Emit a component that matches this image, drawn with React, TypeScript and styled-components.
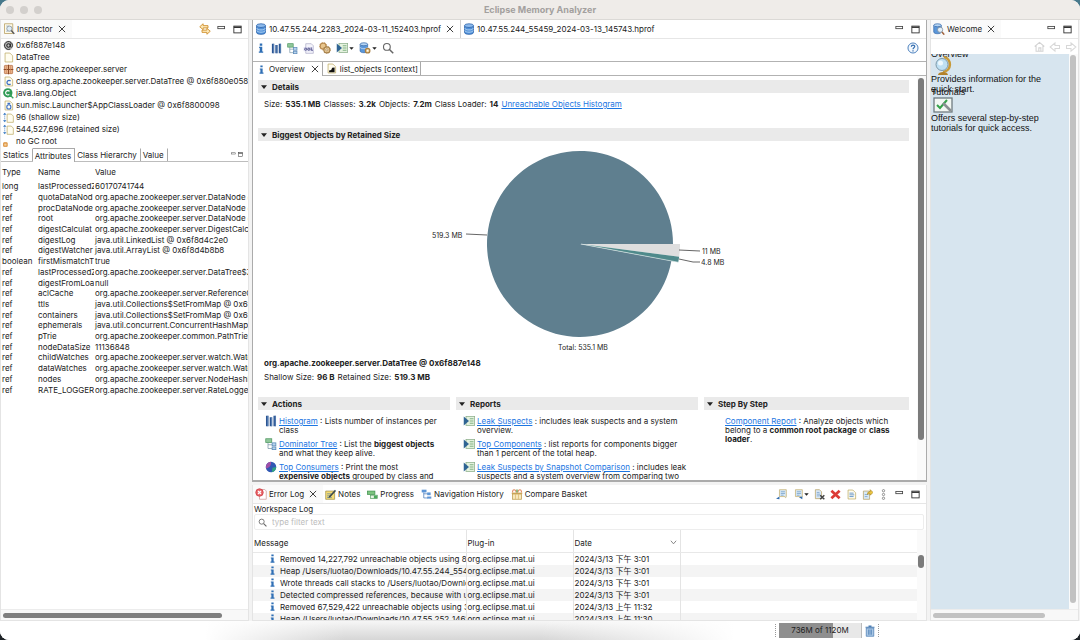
import React from "react";
import styled, { createGlobalStyle, css } from "styled-components";

const GlobalStyle = createGlobalStyle`
  *, *::before, *::after { box-sizing: border-box; }
  body {
    margin: 0;
    background: linear-gradient(#47798c, #1d2226);
    font-family: Inter, "Noto Sans CJK SC", sans-serif;
    font-size: 8px;
    line-height: 12px;
    color: #222;
  }
  button, input { font: inherit; color: inherit; background: none; border: 0; padding: 0; margin: 0; }
  svg { display: block; flex: none; }
  a { color: #1c76e2; text-decoration: underline; }
  b { font-weight: 700; }
`;

/* ---------- layout ---------- */

const Window = styled.div`
  height: 100vh;
  min-height: 480px;
  display: flex;
  flex-direction: column;
  background: #f3f3f3;
  border-radius: 9px;
  overflow: hidden;
`;

const TitleBar = styled.header`
  flex: none;
  height: 20px;
  display: grid;
  grid-template-columns: 1fr auto 1fr;
  align-items: center;
  padding: 0 6px;
  background: #efece9;
  border-bottom: 1px solid #dbd9d6;
`;

const Lights = styled.div`
  display: flex;
  gap: 6px;
`;

const Light = styled.button`
  width: 8px;
  height: 8px;
  border-radius: 50%;
  background: #d3d0cd;
`;

const Title = styled.h1`
  margin: 0;
  font-size: 9px;
  font-weight: 700;
  color: #a3a09e;
`;

const Workbench = styled.main`
  flex: 1;
  min-height: 0;
  display: grid;
  grid-template-columns: 249px minmax(0, 1fr) 149px;
  column-gap: 3px;
  padding-right: 1px;
`;

const Middle = styled.div`
  min-width: 0;
  min-height: 0;
  display: flex;
  flex-direction: column;
  gap: 3px;
`;

const Pane = styled.section<{ $strong?: boolean; $grow?: boolean; $height?: number }>`
  min-width: 0;
  min-height: 0;
  display: flex;
  flex-direction: column;
  overflow: hidden;
  background: #fff;
  border: solid ${(p) => (p.$strong ? "#ababab" : "#e4e4e4")};
  border-width: ${(p) => (p.$strong ? "0 1px 2px" : "0 1px 1px")};
  ${(p) => p.$grow && css`flex: 1;`}
  ${(p) => p.$height && css`flex: none; height: ${p.$height}px;`}
`;

const TabBar = styled.div`
  flex: none;
  height: 19px;
  display: flex;
  align-items: stretch;
  border-bottom: 1px solid #e6e6e6;
`;

const Tab = styled.button<{ $active?: boolean; $lined?: boolean }>`
  display: flex;
  align-items: center;
  gap: 2px;
  padding: 0 5px 0 2px;
  white-space: nowrap;
  background: ${(p) => (p.$active ? "#fafafa" : "transparent")};
  ${(p) => p.$lined && css`background: #fff; border-right: 1px solid #d0d0d0;`}
`;

const Tools = styled.div<{ $gap?: number }>`
  margin-left: auto;
  display: flex;
  align-items: center;
  gap: ${(p) => p.$gap ?? 5}px;
  padding-right: 5px;
`;

const ToolButton = styled.button`
  display: flex;
  align-items: center;
  justify-content: center;
  gap: 1px;
  min-width: 11px;
`;

const Row = styled.li`
  display: flex;
  align-items: center;
  gap: 2px;
  height: 12px;
  padding-left: 2px;
  white-space: nowrap;
  svg { width: 11px; height: 11px; }
`;

const InfoList = styled.ul`
  flex: none;
  margin: 0;
  padding: 0;
  height: 109px;
  list-style: none;
`;

const SubTabs = styled.div`
  flex: none;
  display: flex;
  height: 14px;
  border-bottom: 1px solid #bdbdbd;
`;

const SubTab = styled.button<{ $active?: boolean }>`
  padding: 0 3px 0 2px;
  border-right: 1px solid #a9a9a9;
  border-top: 1px solid ${(p) => (p.$active ? "#a9a9a9" : "transparent")};
  white-space: nowrap;
  ${(p) => p.$active && css`background: #fff; margin-bottom: -1px;`}
`;

const Scroll = styled.div`
  flex: 1;
  min-height: 0;
  overflow: hidden;
`;

const AttrTable = styled.table`
  width: 100%;
  height: 233px;
  table-layout: fixed;
  border-collapse: collapse;
  line-height: 10px;
  th { font-weight: 400; text-align: left; padding: 0 0 0 1px; height: 19px; }
  td { padding: 0 0 0 1px; overflow: hidden; white-space: nowrap; }
`;

const HTrack = styled.div<{ $soft?: boolean }>`
  flex: none;
  height: 11px;
  padding: 3px 2px;
  background: #f8f8f8;
  border-top: 1px solid #ececec;
  &::before {
    content: "";
    display: block;
    width: ${(p) => (p.$soft ? "78%" : "90%")};
    height: 5px;
    border-radius: 3px;
    background: ${(p) => (p.$soft ? "#c2c2c2" : "#7f7f7f")};
  }
`;

const VTrack = styled.div<{ $size: string; $soft?: boolean; $top?: number }>`
  flex: none;
  width: 9px;
  padding: ${(p) => p.$top ?? 1}px 2px 0 1px;
  background: #fafafa;
  &::before {
    content: "";
    display: block;
    height: ${(p) => p.$size};
    border-radius: 3px;
    background: ${(p) => (p.$soft ? "#c2c2c2" : "#7b7b7b")};
  }
`;

const Split = styled.div`
  flex: 1;
  min-height: 0;
  display: flex;
`;

/* ---------- editor ---------- */

const ToolBar = styled.div`
  flex: none;
  height: 22px;
  display: flex;
  align-items: center;
  gap: 5px;
  padding: 0 2px 4px 2px;
`;

const InnerTabs = styled.div`
  flex: none;
  display: flex;
  height: 15px;
  border-top: 1px solid #b2b2b2;
  border-bottom: 1px solid #b2b2b2;
`;

const InnerTab = styled.button<{ $active?: boolean }>`
  display: flex;
  align-items: center;
  gap: 3px;
  padding: 0 2px 0 3px;
  background: #fff;
  border-right: 1px solid #a9a9a9;
  white-space: nowrap;
  ${(p) => p.$active && css`margin-bottom: -1px; padding-left: 4px;`}
`;

const Page = styled.div`
  flex: 1;
  min-width: 0;
  overflow: hidden;
  padding: 4px 8px 0 5px;
`;

const SectionHead = styled.button`
  display: flex;
  align-items: center;
  gap: 5px;
  width: 100%;
  height: 13px;
  padding-left: 3px;
  background: #eaeaea;
  font-weight: 700;
  text-align: left;
`;

const Facts = styled.p<{ $tight?: boolean }>`
  display: flex;
  gap: 3px;
  margin: 0;
  padding: ${(p) => (p.$tight ? "2px 6px 14px" : "5px 6px 18px")};
  white-space: nowrap;
`;

const ObjectName = styled.h2`
  margin: 0;
  padding: 2px 6px 0;
  font-size: 8px;
  line-height: 12px;
`;

const Chart = styled.svg`
  display: block;
  margin: 0 auto;
  font-size: 7px;
  fill: #222;
`;

const Columns = styled.div`
  display: grid;
  grid-template-columns: 192fr 242fr 205fr;
  column-gap: 6px;
`;

const Entries = styled.ul<{ $indent: number }>`
  margin: 0;
  padding: 7px 0 0 ${(p) => p.$indent}px;
  list-style: none;
  line-height: 9px;
`;

const Entry = styled.li`
  display: flex;
  gap: 2px;
  margin-bottom: 5px;
  white-space: nowrap;
  svg { width: 12px; height: 12px; margin-top: -2px; }
`;

/* ---------- log ---------- */

const LogTitle = styled.div`
  flex: none;
  height: 10px;
  padding-left: 1px;
  line-height: 10px;
`;

const Filter = styled.label`
  flex: none;
  display: flex;
  align-items: center;
  gap: 5px;
  height: 16px;
  margin: 0 2px 0 1px;
  padding-left: 3px;
  border: 1px solid #ededed;
  border-radius: 2px;
`;

const FilterInput = styled.input`
  flex: 1;
  outline: none;
  &::placeholder { color: #bcbcbc; opacity: 1; }
`;

const LogTable = styled.table`
  width: 100%;
  table-layout: fixed;
  border-collapse: collapse;
  th { height: 22px; padding: 4px 0 0 1px; font-weight: 400; text-align: left; border-bottom: 1px solid #e8e8e8; }
  td { height: 12px; padding: 0 0 0 1px; overflow: hidden; white-space: nowrap; }
  th + th, td + td { border-left: 1px solid #e4e4e4; }
  tbody tr:nth-child(even) { background: #f4f4f4; }
`;

const Message = styled.span`
  display: flex;
  align-items: center;
  gap: 3px;
  padding-left: 14px;
`;

const DateHead = styled.span`
  display: flex;
  align-items: center;
  justify-content: space-between;
  padding-right: 3px;
`;

/* ---------- welcome ---------- */

const WelcomeTools = styled.div`
  flex: none;
  height: 15px;
  display: flex;
  justify-content: flex-end;
  align-items: center;
  gap: 4px;
  padding-right: 1px;
`;

const WelcomePage = styled.div`
  flex: 1;
  min-width: 0;
  overflow: hidden;
  background: #d7e5ef;
  font-family: "Liberation Sans", Arial, sans-serif;
  font-size: 9px;
  line-height: 10px;
  color: #111;
`;

const Topic = styled.h3<{ $pull: number }>`
  margin: -${(p) => p.$pull}px 0 0;
  font-size: 9px;
  font-weight: 400;
`;

const TopicText = styled.p`
  margin: 0;
  max-width: 116px;
`;

const GlobeStand = styled.svg`
  margin: -3px 0 -2px 3px;
`;

const TutorialPicture = styled.svg`
  margin-left: 2px;
`;

/* ---------- status ---------- */

const StatusBar = styled.footer`
  flex: none;
  height: 19px;
  display: flex;
  align-items: center;
  justify-content: flex-end;
  gap: 2px;
  padding-right: 200px;
  background:
    linear-gradient(90deg, #fff 19%, #fff0 32%, #fff0 50%, #fff 68%),
    linear-gradient(#f6f6f6, #d6d6d6);
`;

const Grip = styled.i`
  width: 2px;
  height: 13px;
  border-left: 1px dotted #999;
`;

const Heap = styled.div`
  width: 83px;
  height: 15px;
  line-height: 15px;
  text-align: center;
  border-right: 1px solid #bbb;
  background: linear-gradient(90deg, #8f8f8f 66%, #e8e8e8 66%);
`;

/* ---------- icons ---------- */

const Icon = ({ children, s = 11 }: { children: React.ReactNode; s?: number }) => (
  <svg width={s} height={s} viewBox="0 0 16 16" fill="none" aria-hidden="true">
    {children}
  </svg>
);

const sheet = <path d="M3 1.5h7l4 4v9H3z" fill="#fffdf0" stroke="#b9a45c" />;

const CloseBox = styled.span`
  margin-left: 2px;
`;
const CloseIcon = () => (
  <CloseBox><Icon s={10}><path d="M3 3l10 10M13 3L3 13" stroke="#333" strokeWidth="1.5" /></Icon></CloseBox>
);
const MinIcon = ({ s = 9 }) => (
  <Icon s={s}><rect x="1.5" y="2.5" width="12" height="4" stroke="#444" strokeWidth="1.5" /></Icon>
);
const MaxIcon = ({ s = 9 }) => (
  <Icon s={s}><rect x="1.5" y="2" width="13" height="12" stroke="#333" strokeWidth="1.6" /><path d="M1.5 4h13" stroke="#333" strokeWidth="2.5" /></Icon>
);
const InfoIcon = ({ s = 10 }) => (
  <Icon s={s}><path d="M6 .8h4v3.400H6zM5 6h5v7.500h1.500v2h-7v-2H6V8H5z" fill="#2f6fb5" /></Icon>
);
const InspectorIcon = () => (
  <Icon s={12}><path d="M2 1h11v13H2z" fill="#fffbe8" stroke="#b49b5c" /><path d="M4 4h4M4 11h3" stroke="#9bb6d6" /><circle cx="8.500" cy="7.500" r="3.500" fill="#dcebf7" stroke="#7c8792" /><path d="M11 10l4 4.500" stroke="#555" strokeWidth="2" /></Icon>
);
const LinkIcon = () => (
  <Icon s={12}><path d="M12 6.500H5.500V9L1 5l4.500-4v2.500H12zM4 9.500h6.500V7L15 11l-4.500 4v-2.500H4z" stroke="#d0902c" fill="#fdeabb" strokeWidth="1.200" /></Icon>
);
const PageIcon = () => <Icon>{sheet}</Icon>;
const AtIcon = () => (
  <Icon><circle cx="8" cy="8" r="7" fill="#c4c4c4" /><circle cx="8" cy="8" r="2.500" stroke="#222" strokeWidth="1.600" /><path d="M10.700 5v4.500c0 2 3 1.500 3-1.500a5.700 5.700 0 1 0-3 5" stroke="#222" strokeWidth="1.400" /></Icon>
);
const PackageIcon = () => (
  <Icon><rect x="2" y="2" width="12" height="12" rx="1" fill="#e8b48c" stroke="#b1643a" /><path d="M8 1v14M1 8h14" stroke="#8f4a27" strokeWidth="1.500" /><path d="M5 2v12M11 2v12" stroke="#d08a60" /></Icon>
);
const ClassFileIcon = () => (
  <Icon>{sheet}<path d="M11 7.500a3 3 0 1 0 0 4" stroke="#3d6fc4" strokeWidth="1.800" /></Icon>
);
const LoaderIcon = () => (
  <Icon>{sheet}<circle cx="8.500" cy="10" r="3" stroke="#3d6fc4" strokeWidth="1.600" /><path d="M6.500 5h4" stroke="#3d6fc4" strokeWidth="2" /></Icon>
);
const SuperClassIcon = () => (
  <Icon><circle cx="7" cy="7" r="6.800" fill="#2f9a55" /><path d="M9.500 5a3.200 3.200 0 1 0 0 4" stroke="#fff" strokeWidth="1.700" /><path d="M10 10l5 5M10 13v-3h3" stroke="#36a35c" strokeWidth="2" /></Icon>
);
const SizeIcon = () => (
  <Icon><path d="M6 3h6l3 3v9H6z" fill="#fffdf0" stroke="#b9a45c" /><path d="M2.500 2v12" stroke="#3d7cc4" strokeDasharray="2 1" /><path d="M0 4l2.500-3L5 4zM0 12l2.500 3L5 12z" fill="#3d7cc4" /></Icon>
);
const RootIcon = () => (
  <Icon><rect x="1" y="10" width="5" height="5" rx="1" fill="#f5cf9b" stroke="#d98b32" strokeWidth="1.500" /></Icon>
);
const DbIcon = () => (
  <Icon s={12}><path d="M2 3.500v9c0 3.500 12 3.500 12 0v-9" fill="#4f8fd8" stroke="#2b62a8" /><ellipse cx="8" cy="3.500" rx="6" ry="2.500" fill="#8dbaec" stroke="#2b62a8" /><path d="M2.500 7c0 3 11 3 11 0M2.500 10c0 3 11 3 11 0" stroke="#b9d8f5" strokeWidth="1.200" /></Icon>
);
const BarsIcon = () => (
  <Icon><path d="M3 1v14M8 3v12M13 1v14" stroke="#2b5593" strokeWidth="3.400" /><path d="M3.700 1v14M8.700 3v12M13.700 1v14" stroke="#7fa3cf" strokeWidth=".8" /></Icon>
);
const TreeIcon = () => (
  <Icon><path d="M4 6v8h6M4 9h6" stroke="#7a96a8" /><rect x="1" y="1" width="8" height="5" fill="#8fc79a" stroke="#4e9660" /><rect x="9.500" y="6.500" width="5" height="4" fill="#b9d4ee" stroke="#5585b5" /><rect x="9.500" y="12" width="5" height="3.500" fill="#b9d4ee" stroke="#5585b5" /></Icon>
);
const OqlIcon = () => (
  <Icon><path d="M4 1h8l3 3v11H4z" fill="#f4f4fb" stroke="#aaa9c4" /><rect x="1" y="6" width="14" height="6" fill="#dad9ee" /><circle cx="4" cy="9" r="1.600" stroke="#42437d" strokeWidth="1.200" /><circle cx="8.500" cy="9" r="1.600" stroke="#42437d" strokeWidth="1.200" /><path d="M12 6.500v4h2.500" stroke="#42437d" strokeWidth="1.200" /></Icon>
);
const GearsIcon = () => (
  <Icon s={12}><circle cx="5.500" cy="5.500" r="4" fill="#e8c68e" stroke="#b98a4d" strokeWidth="1.600" /><circle cx="5.500" cy="5.500" r="5" stroke="#b98a4d" strokeDasharray="1.500 2" /><circle cx="10.500" cy="10.500" r="4" fill="#edcf9c" stroke="#a8834d" strokeWidth="1.400" /><circle cx="10.500" cy="10.500" r="4.900" stroke="#a8834d" strokeDasharray="1.500 2" /><circle cx="10.500" cy="10.500" r="1.500" fill="#fff" stroke="#a8834d" /></Icon>
);
const ReportIcon = () => (
  <Icon s={12}><rect x="4" y="2" width="11.500" height="12" fill="#e5f2df" stroke="#8cae8a" /><path d="M9 5h5M9 8h5M9 11h5" stroke="#7fb184" strokeWidth="1.300" /><path d="M1 2l7 6-7 6z" fill="#2f6493" /></Icon>
);
const DbGearIcon = () => (
  <Icon s={12}><path d="M1.500 3v9c0 3 10 3 10 0V3" fill="#5b97da" stroke="#3a6cab" /><ellipse cx="6.500" cy="3" rx="5" ry="2" fill="#b5d4f3" stroke="#3a6cab" /><path d="M1.500 7c0 2.500 10 2.500 10 0" stroke="#cfe3f8" /><circle cx="11.500" cy="11.500" r="3" fill="#edcf98" stroke="#aa8043" strokeWidth="1.600" /><circle cx="11.500" cy="11.500" r="1" fill="#fff" /></Icon>
);
const CaretIcon = () => <Icon s={5}><path d="M1 4h14l-7 8z" fill="#222" /></Icon>;
const ChevronIcon = () => <Icon s={7}><path d="M2 4l6 7 6-7" stroke="#777" strokeWidth="2" /></Icon>;
const SearchIcon = ({ s = 12 }) => (
  <Icon s={s}><circle cx="6.500" cy="6.500" r="4.500" stroke="#666" strokeWidth="1.500" /><path d="M10 10l5 5" stroke="#666" strokeWidth="2" /></Icon>
);
const HelpIcon = () => (
  <Icon s={12}><circle cx="8" cy="8" r="6.700" fill="#f3f8fd" stroke="#4a80bd" strokeWidth="1.300" /><path d="M5.800 6.300c0-3 4.600-2.800 4.500-.2C10.200 7.800 8 7.600 8 9.700M8 11v1.600" stroke="#336cae" strokeWidth="1.600" /></Icon>
);
const ContextIcon = () => (
  <Icon>{sheet}<path d="M4.500 13.500V11l3-1 1.500-3 3.500-.5v7z" fill="#111" /></Icon>
);
const GlobeIcon = () => (
  <Icon s={12}><circle cx="8" cy="8" r="7" fill="#3158b4" /><path d="M8 1a7 7 0 0 0-6.500 9C5 9 9 6 8 1z" fill="#a04fa6" /><path d="M9 15c4-1 6-4 6-7l-5 1z" fill="#32a384" /></Icon>
);
const ErrorLogIcon = () => (
  <Icon s={12}><path d="M6 2h7l2 2v11H6z" fill="#fff" stroke="#c99" /><circle cx="6" cy="6" r="5" fill="#e8666a" stroke="#cc3a41" /><path d="M4 4l4 4M8 4L4 8" stroke="#fff" strokeWidth="1.600" /></Icon>
);
const NotesIcon = () => (
  <Icon><path d="M1 3h13v12H1z" fill="#f6dd74" stroke="#9b8b45" /><path d="M3 7h6M3 10h4M3 12.500h7" stroke="#4f79aa" /><path d="M14.500 1L6 10l-1 3 3-1.500L16 3z" fill="#3c4a4f" /></Icon>
);
const ProgressIcon = () => (
  <Icon><rect x=".5" y="3" width="11" height="5" fill="#7cc47f" stroke="#3d8f4d" /><rect x="5" y="9" width="10" height="5" fill="#e7f4e5" stroke="#559e62" /><path d="M10 9.500h4.500v4H10z" fill="#4ba75b" /></Icon>
);
const HistoryIcon = () => (
  <Icon><path d="M4 5v8h6M4 7h6" stroke="#3a70b3" /><rect x="1" y="1" width="7" height="4" fill="#5d95d6" /><rect x="9" y="5" width="5" height="4" fill="#5d95d6" /><rect x="9" y="11" width="6" height="3" fill="#5d95d6" /></Icon>
);
const BasketIcon = () => (
  <Icon s={12}><rect x="2" y="8" width="12" height="7" fill="#f8e8bd" stroke="#c09c4d" /><path d="M1 7h14" stroke="#c69a44" strokeWidth="1.600" /><path d="M6 8v7M10 8v7" stroke="#dcbb74" /><path d="M2 6c0-5 4-5 5 0M9 6c1-5 5-5 5 0" stroke="#e08a62" strokeWidth="1.400" /><path d="M8 2v4" stroke="#72a85c" strokeWidth="2" /></Icon>
);
const ExportIcon = ({ right = false }) => (
  <Icon><path d="M5 1h10v10c0 2-2 2-2 0H5z" fill="#d8e9f5" stroke="#c3ab64" /><path d="M7 4h6M7 6.500h6M7 9h4" stroke="#6b98c4" /><path d={right ? "M10 12l5-1v4z" : "M0 14l5-3v4z"} fill="#2f6bad" /></Icon>
);
const ClearIcon = () => (
  <Icon><path d="M2 1h6l3 3v10H2z" fill="#dae8f5" stroke="#b59e5b" /><path d="M4 5h4M4 7.500h5M4 10h4" stroke="#6b98c4" /><path d="M9 9l6 6M15 9l-6 6" stroke="#444" strokeWidth="2.200" /></Icon>
);
const DeleteIcon = () => <Icon><path d="M2 2.500l12 11M14 2.500l-12 11" stroke="#dc3b36" strokeWidth="4" /></Icon>;
const LogFileIcon = () => (
  <Icon>{sheet}<path d="M5 6h6M5 8.500h7M5 11h6" stroke="#5d8fc7" strokeWidth="1.300" /></Icon>
);
const RestoreIcon = () => (
  <Icon><path d="M2 3h9v12H2z" fill="#d8e9f5" stroke="#b59e5b" /><path d="M4 8h5M4 11h4" stroke="#6b98c4" /><path d="M8 8c0-4 2-4 4-4V1l4 4-4 4V7c-2 0-3 0-4 1z" fill="#efc840" stroke="#a98520" /></Icon>
);
const DotsIcon = () => (
  <Icon><circle cx="8" cy="2.500" r="1.700" stroke="#666" /><circle cx="8" cy="8" r="1.700" stroke="#666" /><circle cx="8" cy="13.500" r="1.700" stroke="#666" /></Icon>
);
const WelcomeIcon = () => (
  <Icon s={12}><path d="M1 3v9c0 3 10 3 10 0V3" fill="#5b97da" stroke="#3a6cab" /><ellipse cx="6" cy="3" rx="5" ry="2" fill="#b5d4f3" stroke="#3a6cab" /><circle cx="9.500" cy="9" r="3.500" fill="#e4f0fa" stroke="#7b8894" /><path d="M12 12l3 3.500" stroke="#a0623c" strokeWidth="2" /></Icon>
);
const HomeIcon = () => <Icon><path d="M1 8l7-6 7 6M3 7v8h10V7M7 15v-5h3v5" stroke="#d3d3d3" strokeWidth="1.500" /></Icon>;
const ArrowIcon = ({ right = false }) => (
  <Icon s={12}><path d={right ? "M2 6h6V2.500L14.500 8 8 13.500V10H2z" : "M14 6H8V2.500L1.500 8 8 13.500V10h6z"} stroke="#d8d8d8" strokeWidth="1.400" /></Icon>
);
const TrashIcon = () => (
  <Icon s={12}><path d="M3 4h10v11H3z" fill="#a9c6e4" stroke="#4b7db3" /><path d="M2 3h12M6 1.500h4M6.500 6v7M9.500 6v7" stroke="#4b7db3" strokeWidth="1.400" /></Icon>
);

/* ---------- data ---------- */

const info: [React.ReactNode, string][] = [
  [<AtIcon />, "0x6f887e148"],
  [<PageIcon />, "DataTree"],
  [<PackageIcon />, "org.apache.zookeeper.server"],
  [<ClassFileIcon />, "class org.apache.zookeeper.server.DataTree @ 0x6f880e058"],
  [<SuperClassIcon />, "java.lang.Object"],
  [<LoaderIcon />, "sun.misc.Launcher$AppClassLoader @ 0x6f8800098"],
  [<SizeIcon />, "96 (shallow size)"],
  [<SizeIcon />, "544,527,696 (retained size)"],
  [<RootIcon />, "no GC root"],
];

const attributes = [
  ["long", "lastProcessedZ", "60170741744"],
  ["ref", "quotaDataNod", "org.apache.zookeeper.server.DataNode @"],
  ["ref", "procDataNode", "org.apache.zookeeper.server.DataNode @"],
  ["ref", "root", "org.apache.zookeeper.server.DataNode @"],
  ["ref", "digestCalculat", "org.apache.zookeeper.server.DigestCalcu"],
  ["ref", "digestLog", "java.util.LinkedList @ 0x6f8d4c2e0"],
  ["ref", "digestWatcher", "java.util.ArrayList @ 0x6f8d4b8b8"],
  ["boolean", "firstMismatchT", "true"],
  ["ref", "lastProcessedZ", "org.apache.zookeeper.server.DataTree$Z"],
  ["ref", "digestFromLoa", "null"],
  ["ref", "aclCache", "org.apache.zookeeper.server.ReferenceC"],
  ["ref", "ttls", "java.util.Collections$SetFromMap @ 0x6f"],
  ["ref", "containers", "java.util.Collections$SetFromMap @ 0x6f"],
  ["ref", "ephemerals", "java.util.concurrent.ConcurrentHashMap"],
  ["ref", "pTrie", "org.apache.zookeeper.common.PathTrie"],
  ["ref", "nodeDataSize", "11136848"],
  ["ref", "childWatches", "org.apache.zookeeper.server.watch.Watc"],
  ["ref", "dataWatches", "org.apache.zookeeper.server.watch.Watc"],
  ["ref", "nodes", "org.apache.zookeeper.server.NodeHashM"],
  ["ref", "RATE_LOGGER", "org.apache.zookeeper.server.RateLogger"],
];

const logRows = [
  ["Removed 14,227,792 unreachable objects using 8", "2024/3/13 下午 3:01"],
  ["Heap /Users/luotao/Downloads/10.47.55.244_554", "2024/3/13 下午 3:01"],
  ["Wrote threads call stacks to /Users/luotao/Downlo", "2024/3/13 下午 3:01"],
  ["Detected compressed references, because with u", "2024/3/13 下午 3:01"],
  ["Removed 67,529,422 unreachable objects using 3", "2024/3/13 上午 11:32"],
  ["Heap /Users/luotao/Downloads/10.47.55.252_1461", "2024/3/13 上午 11:30"],
];

/* ---------- parts ---------- */

const WindowTools = () => (
  <>
    <ToolButton aria-label="Minimize"><MinIcon /></ToolButton>
    <ToolButton aria-label="Maximize"><MaxIcon /></ToolButton>
  </>
);

const Head = ({ children }: { children: React.ReactNode }) => (
  <SectionHead><Icon s={6}><path d="M0 3h16l-8 10z" fill="#222" /></Icon>{children}</SectionHead>
);

const Inspector = () => (
  <Pane>
    <TabBar>
      <Tab $active><InspectorIcon />Inspector<CloseIcon /></Tab>
      <Tools>
        <ToolButton aria-label="Link with snapshot"><LinkIcon /></ToolButton>
        <WindowTools />
      </Tools>
    </TabBar>
    <InfoList>
      {info.map(([icon, text]) => <Row key={text}>{icon}{text}</Row>)}
    </InfoList>
    <SubTabs>
      <SubTab>Statics</SubTab>
      <SubTab $active>Attributes</SubTab>
      <SubTab>Class Hierarchy</SubTab>
      <SubTab>Value</SubTab>
      <Tools $gap={2}>
        <MinIcon s={5} /><MaxIcon s={5} />
      </Tools>
    </SubTabs>
    <Scroll>
      <AttrTable>
        <colgroup><col width="36" /><col width="57" /><col /></colgroup>
        <thead><tr><th>Type</th><th>Name</th><th>Value</th></tr></thead>
        <tbody>
          {attributes.map((r, i) => (
            <tr key={i}>{r.map((c) => <td key={c}>{c}</td>)}</tr>
          ))}
        </tbody>
      </AttrTable>
    </Scroll>
    <HTrack />
  </Pane>
);

const Pie = () => (
  <Chart width="321" height="214" viewBox="0 0 321 214" role="img" aria-label="Biggest objects by retained size">
    <path d="M157 103L248.400 120.100A93 93 0 1 1 250 103z" fill="#5f7f8f" />
    <path d="M158 103h99a99 99 0 0 1-.8 12.800z" fill="#dedede" />
    <path d="M158 103l98.200 12.800a99 99 0 0 1-1 5.400z" fill="#4f8a8b" />
    <path d="M158 103l97.200 18.200" stroke="#dfe9ea" strokeWidth=".6" />
    <path d="M43 93l21 1M256 109l21 1M256 118l14 3h7" stroke="#555" strokeWidth=".9" fill="none" />
    <text x="9" y="97">519.3 MB</text>
    <text x="279" y="113">11 MB</text>
    <text x="278" y="124">4.8 MB</text>
    <text x="160" y="209" textAnchor="middle">Total: 535.1 MB</text>
  </Chart>
);

const Editor = () => (
  <Pane $strong $grow>
    <TabBar>
      <Tab $lined><DbIcon />10.47.55.244_2283_2024-03-11_152403.hprof<CloseIcon /></Tab>
      <Tab><DbIcon />10.47.55.244_55459_2024-03-13_145743.hprof</Tab>
      <Tools><WindowTools /></Tools>
    </TabBar>
    <ToolBar>
      <ToolButton aria-label="Overview"><InfoIcon /></ToolButton>
      <ToolButton aria-label="Histogram"><BarsIcon /></ToolButton>
      <ToolButton aria-label="Dominator tree"><TreeIcon /></ToolButton>
      <ToolButton aria-label="OQL"><OqlIcon /></ToolButton>
      <ToolButton aria-label="Thread overview"><GearsIcon /></ToolButton>
      <ToolButton aria-label="Run report"><ReportIcon /><CaretIcon /></ToolButton>
      <ToolButton aria-label="Query browser"><DbGearIcon /><CaretIcon /></ToolButton>
      <ToolButton aria-label="Find object"><SearchIcon /></ToolButton>
      <Tools $gap={0}><ToolButton aria-label="Help"><HelpIcon /></ToolButton></Tools>
    </ToolBar>
    <InnerTabs>
      <InnerTab $active><InfoIcon s={9} />Overview<CloseIcon /></InnerTab>
      <InnerTab><ContextIcon />list_objects [context]</InnerTab>
    </InnerTabs>
    <Split>
      <Page>
        <Head>Details</Head>
        <Facts>
          <span>Size:</span><b>535.1 MB</b><span>Classes:</span><b>3.2k</b><span>Objects:</span><b>7.2m</b>
          <span>Class Loader:</span><b>14</b><a href="#unreachable">Unreachable Objects Histogram</a>
        </Facts>
        <Head>Biggest Objects by Retained Size</Head>
        <Pie />
        <ObjectName>org.apache.zookeeper.server.DataTree @ 0x6f887e148</ObjectName>
        <Facts $tight><span>Shallow Size:</span><b>96 B</b><span>Retained Size:</span><b>519.3 MB</b></Facts>
        <Columns>
          <div>
            <Head>Actions</Head>
            <Entries $indent={7}>
              <Entry><BarsIcon /><span><a href="#histogram">Histogram</a> : Lists number of instances per<br />class</span></Entry>
              <Entry><TreeIcon /><span><a href="#dominator">Dominator Tree</a> : List the <b>biggest objects</b><br />and what they keep alive.</span></Entry>
              <Entry><GlobeIcon /><span><a href="#consumers">Top Consumers</a> : Print the most<br /><b>expensive objects</b> grouped by class and</span></Entry>
            </Entries>
          </div>
          <div>
            <Head>Reports</Head>
            <Entries $indent={7}>
              <Entry><ReportIcon /><span><a href="#leaks">Leak Suspects</a> : includes leak suspects and a system<br />overview.</span></Entry>
              <Entry><ReportIcon /><span><a href="#components">Top Components</a> : list reports for components bigger<br />than 1 percent of the total heap.</span></Entry>
              <Entry><ReportIcon /><span><a href="#comparison">Leak Suspects by Snapshot Comparison</a> : includes leak<br />suspects and a system overview from comparing two</span></Entry>
            </Entries>
          </div>
          <div>
            <Head>Step By Step</Head>
            <Entries $indent={21}>
              <Entry><span><a href="#component-report">Component Report</a> : Analyze objects which<br />belong to a <b>common root package</b> or <b>class<br />loader</b>.</span></Entry>
            </Entries>
          </div>
        </Columns>
      </Page>
      <VTrack $size="90%" $top={2} />
    </Split>
  </Pane>
);

const ErrorLog = () => (
  <Pane $height={136}>
    <TabBar>
      <Tab $active><ErrorLogIcon />Error Log<CloseIcon /></Tab>
      <Tab><NotesIcon />Notes</Tab>
      <Tab><ProgressIcon />Progress</Tab>
      <Tab><HistoryIcon />Navigation History</Tab>
      <Tab><BasketIcon />Compare Basket</Tab>
      <Tools>
        <ToolButton aria-label="Export log"><ExportIcon /></ToolButton>
        <ToolButton aria-label="Import log"><ExportIcon right /><CaretIcon /></ToolButton>
        <ToolButton aria-label="Clear log viewer"><ClearIcon /></ToolButton>
        <ToolButton aria-label="Delete log"><DeleteIcon /></ToolButton>
        <ToolButton aria-label="Open log"><LogFileIcon /></ToolButton>
        <ToolButton aria-label="Restore log"><RestoreIcon /></ToolButton>
        <ToolButton aria-label="View menu"><DotsIcon /></ToolButton>
        <WindowTools />
      </Tools>
    </TabBar>
    <LogTitle>Workspace Log</LogTitle>
    <Filter>
      <SearchIcon s={9} />
      <FilterInput type="text" placeholder="type filter text" aria-label="Filter log" />
    </Filter>
    <Split>
      <Scroll>
        <LogTable>
          <colgroup><col width="213" /><col width="107" /><col width="107" /><col /></colgroup>
          <thead>
            <tr><th>Message</th><th>Plug-in</th><th><DateHead>Date<ChevronIcon /></DateHead></th><th /></tr>
          </thead>
          <tbody>
            {logRows.map(([message, date]) => (
              <tr key={message}>
                <td><Message><InfoIcon s={9} />{message}</Message></td>
                <td>org.eclipse.mat.ui</td>
                <td>{date}</td>
                <td />
              </tr>
            ))}
          </tbody>
        </LogTable>
      </Scroll>
      <VTrack $size="13px" $top={25} />
    </Split>
  </Pane>
);

const Welcome = () => (
  <Pane>
    <TabBar>
      <Tab $active><WelcomeIcon />Welcome<CloseIcon /></Tab>
      <Tools><WindowTools /></Tools>
    </TabBar>
    <WelcomeTools>
      <ToolButton aria-label="Home"><HomeIcon /></ToolButton>
      <ToolButton aria-label="Back"><ArrowIcon /></ToolButton>
      <ToolButton aria-label="Forward"><ArrowIcon right /></ToolButton>
    </WelcomeTools>
    <Split>
      <WelcomePage>
        <Topic $pull={5}>Overview</Topic>
        <GlobeStand width="18" height="20" viewBox="0 0 18 20" aria-hidden="true">
          <path d="M10 1c8 2 8 14-1 15" fill="none" stroke="#c79a3a" strokeWidth="2.500" />
          <path d="M4 19c0-4 10-4 10 0z" fill="#b3822a" />
          <circle cx="8" cy="8.500" r="6" fill="#bfe0f3" stroke="#7d98a8" />
          <circle cx="6.500" cy="7" r="2.500" fill="#eef8fd" />
        </GlobeStand>
        <TopicText>Provides information for the quick start.</TopicText>
        <Topic $pull={7}>Tutorials</Topic>
        <TutorialPicture width="21" height="16" viewBox="0 0 21 16" aria-hidden="true">
          <rect x="1" y="1" width="18" height="14" fill="#f2f7f3" stroke="#6f7c80" strokeWidth="1.300" />
          <path d="M4 8l3 3 7-8" fill="none" stroke="#35a24a" strokeWidth="2" />
          <path d="M10 6l8 8" stroke="#8a8f93" strokeWidth="2.500" />
        </TutorialPicture>
        <TopicText>Offers several step-by-step tutorials for quick access.</TopicText>
      </WelcomePage>
      <VTrack $size="99%" $soft />
    </Split>
    <HTrack $soft />
  </Pane>
);

export default function App() {
  return (
    <>
      <GlobalStyle />
      <Window>
        <TitleBar>
          <Lights>
            <Light aria-label="Close window" />
            <Light aria-label="Minimize window" />
            <Light aria-label="Zoom window" />
          </Lights>
          <Title>Eclipse Memory Analyzer</Title>
        </TitleBar>
        <Workbench>
          <Inspector />
          <Middle>
            <Editor />
            <ErrorLog />
          </Middle>
          <Welcome />
        </Workbench>
        <StatusBar>
          <Grip />
          <Heap>736M of 1120M</Heap>
          <ToolButton aria-label="Run garbage collector"><TrashIcon /></ToolButton>
          <Grip />
        </StatusBar>
      </Window>
    </>
  );
}
